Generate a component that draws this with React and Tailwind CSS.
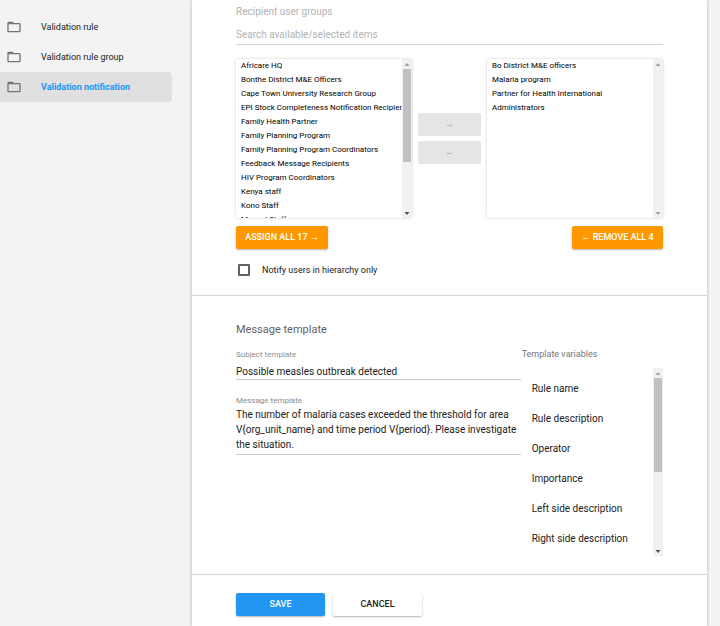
import React, { useState } from "react";

const navItems = ["Validation rule", "Validation rule group", "Validation notification"];

const availableGroups = [
  "Africare HQ",
  "Bonthe District M&E Officers",
  "Cape Town University Research Group",
  "EPI Stock Completeness Notification Recipients",
  "Family Health Partner",
  "Family Planning Program",
  "Family Planning Program Coordinators",
  "Feedback Message Recipients",
  "HIV Program Coordinators",
  "Kenya staff",
  "Kono Staff",
  "Mansal Staff",
  "Nutrition Program",
  "Nutrition Program Coordinators",
  "Research Group",
  "System Administrators",
  "TB Program Coordinators",
];

const selectedGroups = [
  "Bo District M&E officers",
  "Malaria program",
  "Partner for Health International",
  "Administrators",
];

const templateVariables = [
  "Rule name",
  "Rule description",
  "Operator",
  "Importance",
  "Left side description",
  "Right side description",
];

function FolderIcon() {
  return (
    <svg viewBox="0 0 24 24" className="w-4 h-4 shrink-0" fill="#757575" aria-hidden="true">
      <path d="M20 6h-8l-2-2H4c-1.1 0-1.99.9-1.99 2L2 18c0 1.1.9 2 2 2h16c1.1 0 2-.9 2-2V8c0-1.1-.9-2-2-2zm0 12H4V8h16v10z" />
    </svg>
  );
}

function ScrollBar({ thumb, upColor = "#a3a3a3", downColor = "#505050" }) {
  return (
    <div className="w-[10px] shrink-0 flex flex-col items-center bg-[#f1f1f1]" aria-hidden="true">
      <svg viewBox="0 0 10 10" className="w-[10px] h-[10px] shrink-0">
        <path d="M5 4l2.5 3h-5z" fill={upColor} />
      </svg>
      <div className="flex-1 w-full px-px">
        {thumb && <div className="w-full bg-[#c1c1c1]" style={{ height: thumb }} />}
      </div>
      <svg viewBox="0 0 10 10" className="w-[10px] h-[10px] shrink-0">
        <path d="M5 7l2.5-3h-5z" fill={downColor} />
      </svg>
    </div>
  );
}

function GroupList({ label, items, onSelect, children }) {
  return (
    <div className="flex min-w-0 h-[159px] rounded-xs bg-white shadow-[0_0_3px_rgba(0,0,0,0.2)]">
      <select
        multiple
        aria-label={label}
        onChange={(e) => onSelect(Array.from(e.target.selectedOptions, (o) => o.value))}
        className="flex-1 min-w-0 h-full pt-[2px] overflow-x-hidden overflow-y-auto text-[8px] text-black outline-none [scrollbar-width:none]"
      >
        {items.map((item) => (
          <option key={item} value={item} className="h-[14px] min-h-0 p-0 pl-[5px] leading-[14px]">
            {item}
          </option>
        ))}
      </select>
      {children}
    </div>
  );
}

function App() {
  const [available, setAvailable] = useState(availableGroups);
  const [assigned, setAssigned] = useState(selectedGroups);
  const [pickedLeft, setPickedLeft] = useState([]);
  const [pickedRight, setPickedRight] = useState([]);
  const [search, setSearch] = useState("");
  const [hierarchyOnly, setHierarchyOnly] = useState(false);
  const [subject, setSubject] = useState("Possible measles outbreak detected");
  const [message, setMessage] = useState(
    "The number of malaria cases exceeded the threshold for area V{org_unit_name} and time period V{period}. Please investigate the situation."
  );

  const matches = (item) => item.toLowerCase().includes(search.toLowerCase());

  const assign = (items) => {
    setAvailable(available.filter((i) => !items.includes(i)));
    setAssigned([...assigned, ...items]);
    setPickedLeft([]);
  };

  const remove = (items) => {
    setAssigned(assigned.filter((i) => !items.includes(i)));
    setAvailable([...available, ...items]);
    setPickedRight([]);
  };

  return (
    <div className="min-h-screen flex bg-[#f3f3f3] pr-[13px] font-[Roboto,sans-serif] text-[#212121]">
      <nav className="w-48 shrink-0 pt-3 pr-5">
        {navItems.map((item) => (
          <a
            key={item}
            href="#"
            className={`flex items-center h-[30px] pl-[6px] gap-[19px] rounded-r-sm text-[9px] leading-4 ${
              item === "Validation notification" ? "bg-[#e0e0e0] text-[#2196f3] font-bold" : ""
            }`}
          >
            <FolderIcon />
            {item}
          </a>
        ))}
      </nav>

      <main className="flex-1 min-w-0 bg-white shadow-[0_0_3px_rgba(0,0,0,0.3)]">
        <section className="px-11 pt-1 pb-[17px] border-b border-[#d5d5d5]">
          <label htmlFor="search" className="block text-[10px] leading-4 text-[#b3b3b3]">
            Recipient user groups
          </label>
          <input
            id="search"
            value={search}
            onChange={(e) => setSearch(e.target.value)}
            placeholder="Search available/selected items"
            className="block w-full mt-1 h-[21px] border-b border-[#d5d5d5] text-[10px] placeholder:text-[#b3b3b3] outline-none"
          />

          <div className="mt-[14px] grid grid-cols-[1fr_63px_1fr] gap-[6px]">
            <GroupList label="Available groups" items={available.filter(matches)} onSelect={setPickedLeft}>
              <ScrollBar thumb="67%" />
            </GroupList>
            <div className="flex flex-col pt-[54px] gap-[5px]">
              <button
                type="button"
                disabled={pickedLeft.length === 0}
                onClick={() => assign(pickedLeft)}
                className="h-[23px] rounded-xs bg-[#e5e5e5] text-[9px] text-[#a6a6a6]"
              >
                →
              </button>
              <button
                type="button"
                disabled={pickedRight.length === 0}
                onClick={() => remove(pickedRight)}
                className="h-[23px] rounded-xs bg-[#e5e5e5] text-[9px] text-[#a6a6a6]"
              >
                ←
              </button>
            </div>
            <GroupList label="Selected groups" items={assigned.filter(matches)} onSelect={setPickedRight}>
              <ScrollBar downColor="#a3a3a3" />
            </GroupList>
          </div>

          <div className="mt-2 flex justify-between">
            <button
              type="button"
              onClick={() => assign(available)}
              className="h-[23px] w-[92px] rounded-xs bg-[#ff9800] text-[9px] font-medium text-white shadow-[0_1px_2px_rgba(0,0,0,0.3)]"
            >
              ASSIGN ALL {available.length} →
            </button>
            <button
              type="button"
              onClick={() => remove(assigned)}
              className="h-[23px] w-[91px] rounded-xs bg-[#ff9800] text-[9px] font-medium text-white shadow-[0_1px_2px_rgba(0,0,0,0.3)]"
            >
              ← REMOVE ALL {assigned.length}
            </button>
          </div>

          <label className="mt-[13px] pl-[2px] flex items-center gap-3 h-4 text-[9px] leading-4">
            <input
              type="checkbox"
              checked={hierarchyOnly}
              onChange={(e) => setHierarchyOnly(e.target.checked)}
              className="appearance-none w-3 h-3 rounded-[1px] border-2 border-[#616161] checked:bg-[#2196f3] checked:border-[#2196f3]"
            />
            Notify users in hierarchy only
          </label>
        </section>

        <section className="px-11 pt-[26px] pb-[18px] border-b border-[#d5d5d5]">
          <h2 className="text-[11px] leading-4 text-[#616161]">Message template</h2>
          <div className="mt-[10px] grid grid-cols-3">
            <div className="col-span-2 pt-px">
              <label htmlFor="subject" className="block text-[8px] leading-3 text-[#8c8c8c]">
                Subject template
              </label>
              <input
                id="subject"
                value={subject}
                onChange={(e) => setSubject(e.target.value)}
                className="block w-full h-[19px] pt-[2px] border-b border-[#c8c8c8] text-[10px] outline-none"
              />
              <label htmlFor="message" className="block mt-[15px] text-[8px] leading-3 text-[#8c8c8c]">
                Message template
              </label>
              <textarea
                id="message"
                rows={3}
                value={message}
                onChange={(e) => setMessage(e.target.value)}
                className="block w-full pb-[2px] border-b border-[#c8c8c8] text-[10px] leading-[15px] resize-none outline-none overflow-hidden"
              />
            </div>

            <div>
              <h3 className="pl-px text-[9px] leading-3 text-[#757575]">Template variables</h3>
              <div className="mt-2 flex h-[188px]">
                <ul className="flex-1 min-w-0 pt-[5px] overflow-y-auto [scrollbar-width:none]">
                  {templateVariables.map((name) => (
                    <li key={name}>
                      <button
                        type="button"
                        onClick={() => setMessage(`${message} V{${name.toLowerCase().replaceAll(" ", "_")}}`)}
                        className="block w-full h-[30px] pl-[11px] text-left text-[10px] whitespace-nowrap"
                      >
                        {name}
                      </button>
                    </li>
                  ))}
                </ul>
                <ScrollBar thumb="56%" />
              </div>
            </div>
          </div>
        </section>

        <div className="px-11 pt-[18px] pb-[11px] flex gap-2">
          <button
            type="submit"
            className="w-[89px] h-[23px] rounded-xs bg-[#2196f3] text-[9px] font-medium text-white shadow-[0_1px_2px_rgba(0,0,0,0.3)]"
          >
            SAVE
          </button>
          <button
            type="button"
            className="w-[89px] h-[23px] rounded-xs bg-white text-[9px] font-medium shadow-[0_1px_2px_rgba(0,0,0,0.3)]"
          >
            CANCEL
          </button>
        </div>
      </main>
    </div>
  );
}

export default App;
